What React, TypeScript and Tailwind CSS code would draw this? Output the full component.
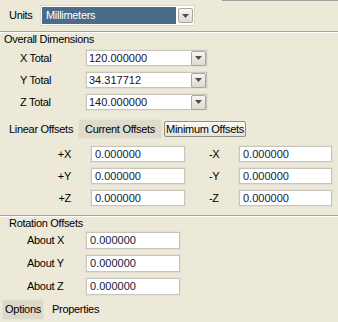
import React from 'react';

function DropButton() {
  return (
    <div className="w-[15px] h-[15px] border border-[#a7a6a0] rounded-[2px] bg-gradient-to-b from-[#f6f5f0] to-[#dcdad0] flex items-center justify-center">
      <svg width="7" height="4" viewBox="0 0 7 4">
        <path d="M0 0h7L3.5 4z" fill="#4d4d4d" />
      </svg>
    </div>
  );
}

function Combo({ value, width }: { value: string; width: string }) {
  return (
    <div className={`${width} h-[18px] bg-white border border-[#e4e1d4] shadow-[inset_0_0_0_1px_#c8c6bc] flex items-center justify-between pl-[3px] pr-[1px]`}>
      <span className="text-[#1a0f2a] tracking-normal">{value}</span>
      <DropButton />
    </div>
  );
}

function Field({ value, width, height = 'h-[18px]' }: { value: string; width: string; height?: string }) {
  return (
    <div className={`${width} ${height} bg-white border border-[#e4e1d4] shadow-[inset_0_0_0_1px_#c8c6bc] flex items-center pl-[4px]`}>
      <span className="text-[#10203a] tracking-normal">{value}</span>
    </div>
  );
}

function Separator() {
  return (
    <div className="w-full">
      <div className="h-px bg-[#a6a49a]" />
      <div className="h-px bg-white" />
    </div>
  );
}

const totals = [
  { label: 'X Total', value: '120.000000' },
  { label: 'Y Total', value: '34.317712' },
  { label: 'Z Total', value: '140.000000' },
];

const offsets = [
  { pos: '+X', neg: '-X' },
  { pos: '+Y', neg: '-Y' },
  { pos: '+Z', neg: '-Z' },
];

const rotations = ['About X', 'About Y', 'About Z'];

export default function App() {
  return (
    <div className="w-[338px] h-[322px] bg-[#ece9d8] overflow-hidden flex flex-col whitespace-nowrap tracking-[-0.3px] font-['Liberation_Sans',Arial,sans-serif] text-[11px] text-black">
      <div className="h-px ml-[222px] bg-[#a0a0a0]" />

      {/* units */}
      <div className="mt-[4px] h-[21px] flex items-center">
        <span className="w-[40px] pl-[9px]">Units</span>
        <div className="w-[155px] h-[21px] bg-white border border-[#dcd9cc] p-[1px] flex items-center">
          <div className="flex-1 h-full bg-[#4b6b86] text-white flex items-center pl-[4px]">Millimeters</div>
          <div className="ml-[2px]">
            <DropButton />
          </div>
        </div>
      </div>

      <div className="mt-[5px]">
        <Separator />
      </div>

      <div className="h-[13px] leading-[13px] pl-[4px]">Overall Dimensions</div>

      <div className="mt-[3px] flex flex-col gap-[4px]">
        {totals.map((t) => (
          <div key={t.label} className="h-[18px] flex items-center">
            <span className="w-[85px] pl-[20px]">{t.label}</span>
            <Combo value={t.value} width="w-[123px]" />
          </div>
        ))}
      </div>

      {/* linear offsets */}
      <div className="mt-[8px] h-[20px] flex items-center">
        <span className="w-[78px] pl-[9px]">Linear Offsets</span>
        <div className="w-[84px] h-[20px] bg-[#dedbcc] border border-[#e6e3d6] flex items-center justify-center">
          Current Offsets
        </div>
        <div className="ml-[2px] w-[82px] h-[16px] rounded-[2px] border border-[#8e8d86] bg-gradient-to-b from-[#fafaf7] to-[#e4e2d8] flex items-center justify-center">
          Minimum Offsets
        </div>
      </div>

      <div className="mt-[6px] flex flex-col gap-[4px]">
        {offsets.map((o) => (
          <div key={o.pos} className="h-[18px] flex items-center">
            <span className="w-[72px] text-right pr-[1px]">{o.pos}</span>
            <div className="ml-[18px]">
              <Field value="0.000000" width="w-[96px]" />
            </div>
            <span className="ml-[23px] w-[29px]">{o.neg}</span>
            <Field value="0.000000" width="w-[95px]" />
          </div>
        ))}
      </div>

      <div className="mt-[8px]">
        <Separator />
      </div>

      <div className="h-[13px] leading-[13px] pl-[9px]">Rotation Offsets</div>

      <div className="mt-[1px] flex flex-col gap-[4px]">
        {rotations.map((r) => (
          <div key={r} className="h-[19px] flex items-center">
            <span className="w-[85px] pl-[27px]">{r}</span>
            <Field value="0.000000" width="w-[96px]" height="h-[19px]" />
          </div>
        ))}
      </div>

      {/* bottom tabs */}
      <div className="mt-[3px] h-[21px] flex items-center">
        <div className="ml-[2px] w-[42px] h-[21px] bg-[#dcd9cb] border border-[#e8e5d8] flex items-center justify-center">
          Options
        </div>
        <span className="ml-[8px]">Properties</span>
      </div>
    </div>
  );
}
